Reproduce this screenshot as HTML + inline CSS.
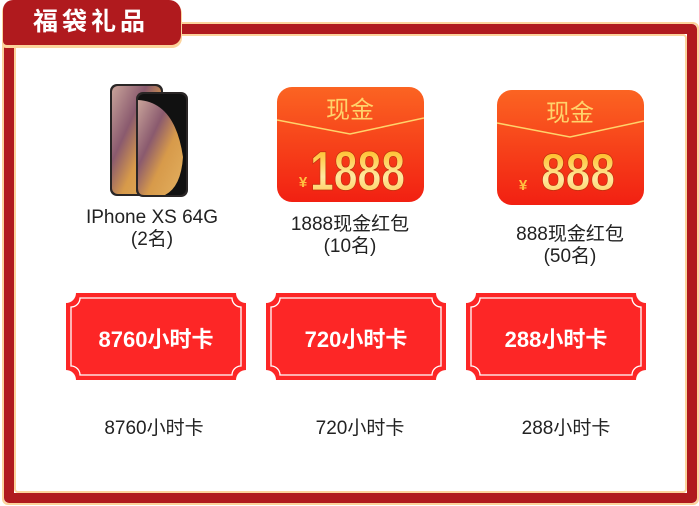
<!DOCTYPE html>
<html><head><meta charset="utf-8"><style>
*{margin:0;padding:0;box-sizing:border-box}
body{width:699px;height:506px;background:#fff;position:relative;overflow:hidden;font-family:"Liberation Sans","Noto Sans CJK SC",sans-serif}
.abs{position:absolute}
.t{position:absolute;text-align:center;font-size:19px;color:#222;line-height:22px}
.card{position:absolute;width:180px;height:87px}
.card span{position:absolute;left:0;right:0;top:29px;text-align:center;color:#fff;font-weight:bold;font-size:22px}
</style></head><body>
<div class="abs" style="left:2px;top:22px;width:697px;height:483px;border:2px solid #fcd39b;border-radius:6px"></div>
<div class="abs" style="left:4px;top:24px;width:693px;height:479px;border:10px solid #b01a1e;border-radius:5px"></div>
<div class="abs" style="left:14px;top:34px;width:673px;height:459px;border:2px solid #fcd39b;border-radius:4px"></div>
<div class="abs" style="left:2px;top:2px;width:180px;height:46px;background:#fcd39b;border-radius:10px 12px 10px 4px"></div>
<div class="abs" style="left:3px;top:0;width:178px;height:45px;background:#b01a1e;border-radius:10px 12px 10px 4px"></div>
<div class="abs" style="left:33px;top:6px;color:#fff;font-size:25px;font-weight:bold;letter-spacing:4px;line-height:32px">福袋礼品</div>

<svg class="abs" style="left:105px;top:82px" width="85" height="116">
<defs><linearGradient id="sc" x1="0" y1="0" x2="1" y2="1"><stop offset="0" stop-color="#c9a49a"/><stop offset=".35" stop-color="#8a5a6e"/><stop offset=".6" stop-color="#d79a4a"/><stop offset="1" stop-color="#e3b060"/></linearGradient></defs>
<rect x="5" y="2" width="53" height="112" rx="7" fill="#2a2626"/>
<rect x="7" y="4" width="49" height="108" rx="6" fill="url(#sc)"/>
<rect x="31" y="10" width="52" height="105" rx="7" fill="#2a2626"/>
<rect x="33" y="12" width="48" height="101" rx="6" fill="#111"/>
<path d="M33 18 Q70 20 78 75 Q76 105 60 113 L39 113 Q33 113 33 106Z" fill="url(#sc)"/>
</svg>
<div class="t" style="left:62px;top:207px;width:180px">IPhone XS 64G<br>(2名)</div>

<svg class="abs" style="left:277px;top:87px" width="147" height="115">
<defs><linearGradient id="rp" x1="0" y1="0" x2="0" y2="1"><stop offset="0" stop-color="#fb6422"/><stop offset="1" stop-color="#f22012"/></linearGradient>
<linearGradient id="gd" x1="0" y1="0" x2="0" y2="1"><stop offset="0" stop-color="#ffb000"/><stop offset=".6" stop-color="#ffe9a0"/><stop offset="1" stop-color="#ffc040"/></linearGradient></defs>
<rect width="147" height="115" rx="15" fill="url(#rp)"/>
<path d="M0 33 L73 47 L147 31" stroke="#ffd36b" stroke-width="1.5" fill="none"/>
<text x="73" y="31" text-anchor="middle" font-size="24" fill="#ffd36b" font-family="Noto Sans CJK SC,sans-serif">现金</text>
<text x="26" y="100" text-anchor="middle" font-size="15" fill="#ffc040" font-weight="bold">¥</text>
<text x="33" y="103" font-size="56" textLength="95" lengthAdjust="spacingAndGlyphs" fill="url(#gd)" stroke="#c03010" stroke-width=".8" font-weight="bold" font-family="Liberation Sans,sans-serif">1888</text>
</svg>
<div class="t" style="left:260px;top:214px;width:180px">1888现金红包<br>(10名)</div>

<svg class="abs" style="left:497px;top:90px" width="147" height="115">
<rect width="147" height="115" rx="15" fill="url(#rp)"/>
<path d="M0 33 L73 47 L147 31" stroke="#ffd36b" stroke-width="1.5" fill="none"/>
<text x="73" y="31" text-anchor="middle" font-size="24" fill="#ffd36b" font-family="Noto Sans CJK SC,sans-serif">现金</text>
<text x="26" y="100" text-anchor="middle" font-size="15" fill="#ffc040" font-weight="bold">¥</text>
<text x="44" y="100" font-size="52" textLength="74" lengthAdjust="spacingAndGlyphs" fill="url(#gd)" stroke="#c03010" stroke-width=".8" font-weight="bold" font-family="Liberation Sans,sans-serif">888</text>
</svg>
<div class="t" style="left:490px;top:224px;width:160px">888现金红包<br>(50名)</div>

<svg width="0" height="0" style="position:absolute"><defs>
<g id="cd">
<path d="M10 0 H170 A10 10 0 0 0 180 10 V77 A10 10 0 0 0 170 87 H10 A10 10 0 0 0 0 77 V10 A10 10 0 0 0 10 0Z" fill="#fd2626"/>
<path d="M14 5 H166 A9 9 0 0 0 175 14 V73 A9 9 0 0 0 166 82 H14 A9 9 0 0 0 5 73 V14 A9 9 0 0 0 14 5Z" fill="none" stroke="#fff" stroke-width="1.3"/>
</g></defs></svg>
<div class="card" style="left:66px;top:293px"><svg width="180" height="87"><use href="#cd"/></svg><span>8760小时卡</span></div>
<div class="card" style="left:266px;top:293px"><svg width="180" height="87"><use href="#cd"/></svg><span>720小时卡</span></div>
<div class="card" style="left:466px;top:293px"><svg width="180" height="87"><use href="#cd"/></svg><span>288小时卡</span></div>

<div class="t" style="left:74px;top:418px;width:160px">8760小时卡</div>
<div class="t" style="left:280px;top:418px;width:160px">720小时卡</div>
<div class="t" style="left:486px;top:418px;width:160px">288小时卡</div>
</body></html>
